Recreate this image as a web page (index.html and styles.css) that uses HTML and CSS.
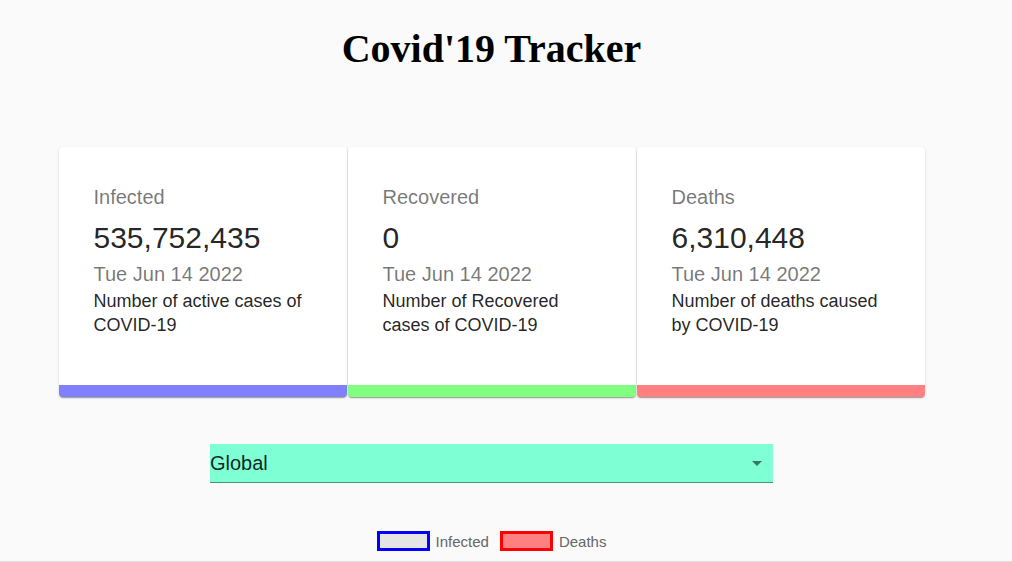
FILE: index.html
```html
<!DOCTYPE html>
<html>
<head>
<meta charset="utf-8">
<link rel="stylesheet" href="styles.css">
</head>
<body>
<div class="app">
  <h1 class="title">Covid'19 Tracker</h1>
  <div class="cards">
    <div class="card card-infected">
      <div class="label">Infected</div>
      <div class="value">535,752,435</div>
      <div class="date">Tue Jun 14 2022</div>
      <div class="desc">Number of active cases of COVID-19</div>
    </div>
    <div class="card card-recovered">
      <div class="label">Recovered</div>
      <div class="value">0</div>
      <div class="date">Tue Jun 14 2022</div>
      <div class="desc">Number of Recovered cases of COVID-19</div>
    </div>
    <div class="card card-deaths">
      <div class="label">Deaths</div>
      <div class="value">6,310,448</div>
      <div class="date">Tue Jun 14 2022</div>
      <div class="desc">Number of deaths caused by COVID-19</div>
    </div>
  </div>
  <div class="select">
    <span class="select-text">Global</span>
    <svg class="select-icon" width="24" height="24" viewBox="0 0 24 24"><path d="M7 10l5 5 5-5z" fill="rgba(0,0,0,0.54)"/></svg>
  </div>
  <div class="legend">
    <span class="legend-box box-infected"></span>
    <span class="legend-text">Infected</span>
    <span class="legend-box box-deaths"></span>
    <span class="legend-text">Deaths</span>
  </div>
  <div class="axis-line"></div>
</div>
</body>
</html>
```

FILE: styles.css
```css
html, body {
  margin: 0;
  padding: 0;
  background: #fafafa;
}
body {
  font-family: "Liberation Sans", Arial, sans-serif;
  overflow: hidden;
}
.app {
  width: 983px;
  display: flex;
  flex-direction: column;
  align-items: center;
}
.title {
  font-family: "Liberation Serif", "Times New Roman", serif;
  font-weight: bold;
  font-size: 40px;
  line-height: 46px;
  margin: 26px 0 0 0;
  color: #000;
}
.cards {
  margin-top: 75px;
  display: flex;
  gap: 1px;
}
.card {
  box-sizing: border-box;
  width: 288px;
  height: 250px;
  background: #fff;
  border-radius: 4px;
  padding: 38px 20px 0 35px;
  box-shadow: 0 2px 1px -1px rgba(0,0,0,0.2), 0 1px 1px 0 rgba(0,0,0,0.14), 0 1px 3px 0 rgba(0,0,0,0.12);
  border-bottom: 12px solid;
}
.card-infected { border-bottom-color: #8080ff; }
.card-recovered { border-bottom-color: #80ff80; }
.card-deaths { border-bottom-color: #ff8080; }
.label {
  font-size: 20px;
  line-height: 24px;
  color: rgba(0,0,0,0.54);
  margin-bottom: 11px;
}
.value {
  font-size: 30px;
  line-height: 36px;
  color: rgba(0,0,0,0.87);
  margin-bottom: 6px;
}
.date {
  font-size: 20px;
  line-height: 24px;
  color: rgba(0,0,0,0.54);
  margin-bottom: 3px;
}
.desc {
  font-size: 18px;
  line-height: 24px;
  color: rgba(0,0,0,0.87);
  width: 218px;
}
.select {
  position: relative;
  margin-top: 47px;
  box-sizing: border-box;
  width: 563px;
  height: 39px;
  background: #7fffd4;
  border-bottom: 1px solid rgba(0,0,0,0.42);
  display: flex;
  align-items: center;
}
.select-text {
  font-size: 20px;
  line-height: 24px;
  color: rgba(0,0,0,0.87);
}
.select-icon {
  position: absolute;
  right: 4px;
  top: 7px;
}
.legend {
  margin-top: 48px;
  display: flex;
  align-items: center;
  height: 20px;
}
.legend-box {
  box-sizing: border-box;
  width: 53px;
  height: 20px;
  border: 3px solid;
}
.box-infected {
  border-color: #0000ff;
  background: #e5e5e5;
}
.box-deaths {
  border-color: #ff0000;
  background: #ff8080;
  margin-left: 11px;
}
.legend-text {
  font-size: 15px;
  color: #666;
  margin-left: 6px;
}
.axis-line {
  margin-top: 10px;
  width: 1012px;
  align-self: flex-start;
  height: 1px;
  background: #e0e0e0;
}
```
